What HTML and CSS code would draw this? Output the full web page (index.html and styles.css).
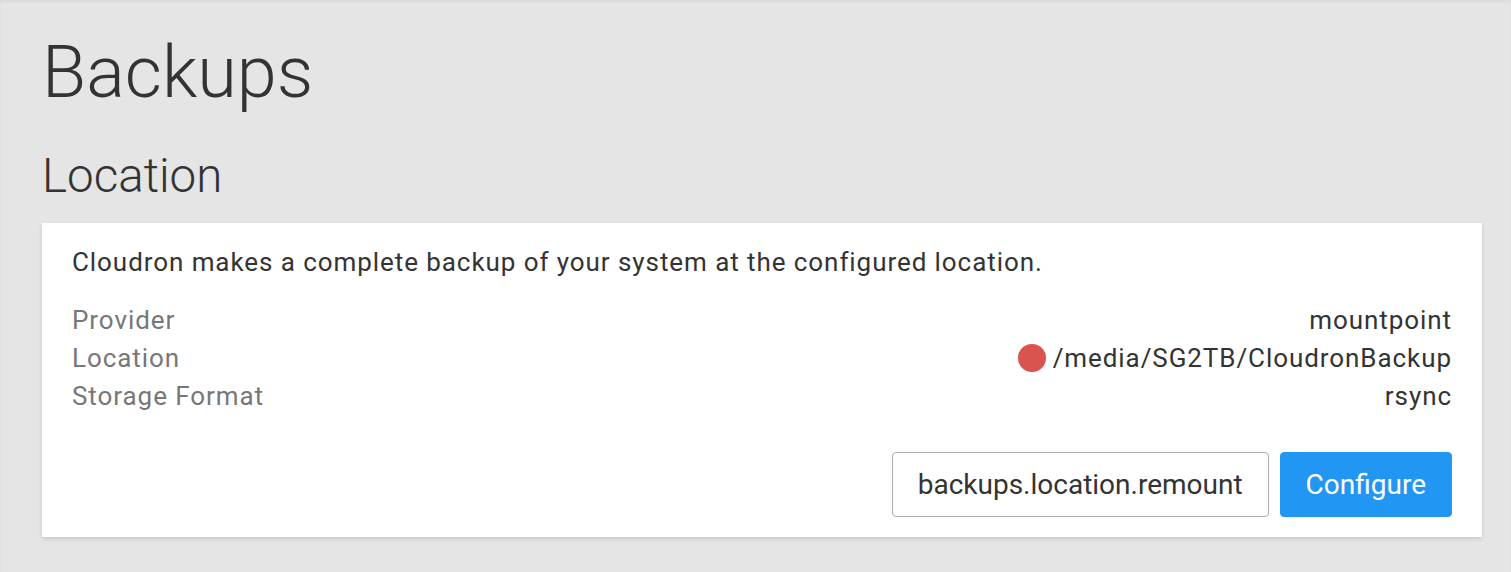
FILE: index.html
```html
<!DOCTYPE html>
<html lang="en">
<head>
    <meta charset="UTF-8">
    <title>Backups</title>
    <link rel="stylesheet" href="styles.css">
</head>
<body>
    <div class="page">
        <h1>Backups</h1>
        <h2>Location</h2>

        <div class="card">
            <p class="intro">Cloudron makes a complete backup of your system at the configured location.</p>

            <div class="info-row">
                <span class="label">Provider</span>
                <span class="value">mountpoint</span>
            </div>
            <div class="info-row">
                <span class="label">Location</span>
                <span class="value"><span class="status-dot"></span>/media/SG2TB/CloudronBackup</span>
            </div>
            <div class="info-row">
                <span class="label">Storage Format</span>
                <span class="value">rsync</span>
            </div>

            <div class="actions">
                <button class="btn btn-outline">backups.location.remount</button>
                <button class="btn btn-primary">Configure</button>
            </div>
        </div>
    </div>
</body>
</html>
```
FILE: styles.css
```css
html, body {
    height: 100%;
}

body {
    margin: 0;
    font-family: 'Roboto', 'Liberation Sans', sans-serif;
    background-color: #e5e5e5;
    box-shadow: inset 0 2px 3px rgba(0, 0, 0, 0.05);
    color: #333333;
}

.page {
    padding: 33px 29px 0 42px;
}

h1 {
    margin: 0;
    font-size: 72px;
    font-weight: 300;
    line-height: 1.1;
}

h2 {
    margin: 38px 0 0;
    font-size: 47.5px;
    font-weight: 300;
    line-height: 1.1;
}

.card {
    margin-top: 21px;
    background-color: #ffffff;
    padding: 20px 30px;
    box-shadow: 0 2px 4px rgba(0, 0, 0, 0.12);
    font-size: 26px;
    letter-spacing: 0.93px;
}

.intro {
    margin: 0 0 20px;
    line-height: 38px;
}

.info-row {
    display: flex;
    justify-content: space-between;
    line-height: 38px;
}

.label {
    color: #777777;
}

.value {
    display: flex;
    align-items: center;
}

.status-dot {
    width: 28px;
    height: 28px;
    border-radius: 50%;
    background-color: #d9534f;
    margin-right: 7px;
}

.actions {
    display: flex;
    justify-content: flex-end;
    gap: 11px;
    margin-top: 37px;
    letter-spacing: normal;
}

.btn {
    height: 65px;
    padding: 0 25px;
    font-family: inherit;
    font-size: 28px;
    border-radius: 4px;
    cursor: pointer;
}

.btn-outline {
    background-color: #ffffff;
    border: 1px solid #adadad;
    color: #333333;
}

.btn-primary {
    background-color: #2196f3;
    border: 1px solid #2196f3;
    color: #ffffff;
}
```
